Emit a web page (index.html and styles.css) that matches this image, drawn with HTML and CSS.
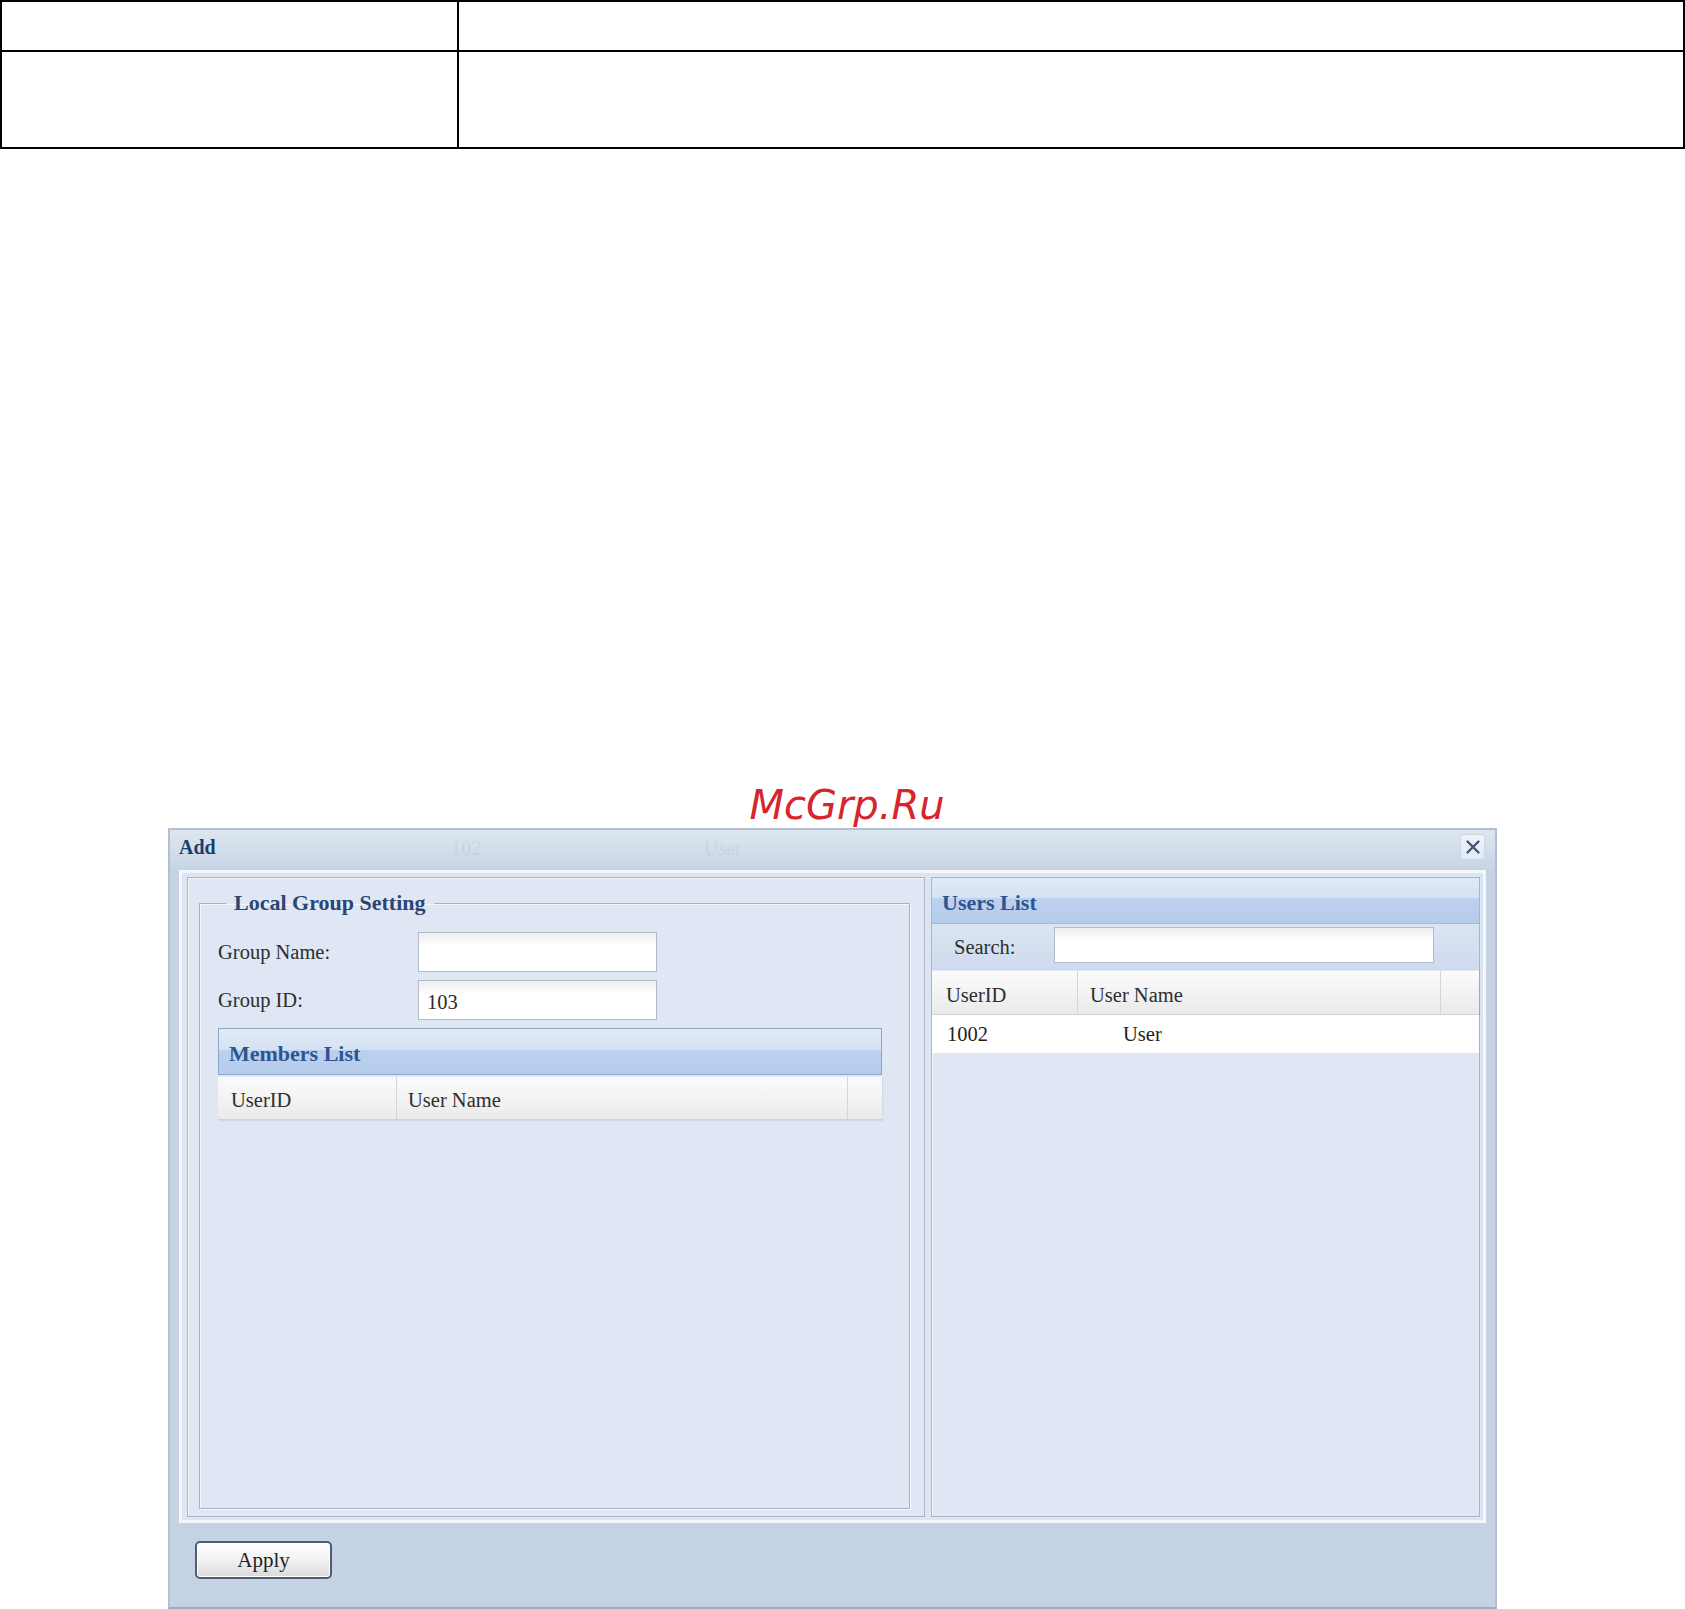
FILE: index.html
```html
<!DOCTYPE html>
<html lang="en">
<head>
<meta charset="utf-8">
<title>Add Local Group</title>
<link rel="stylesheet" href="styles.css">
</head>
<body>
<div class="doc-table">
  <div class="cell c1 r1"></div><div class="cell c2 r1"></div>
  <div class="cell c1 r2"></div><div class="cell c2 r2"></div>
</div>

<div class="watermark">McGrp.Ru</div>

<div class="dialog">
  <div class="titlebar">
    <span class="title">Add</span>
    <span class="ghost g1">102</span>
    <span class="ghost g2">User</span>
    <button class="close" type="button" aria-label="Close">
      <svg width="16" height="16" viewBox="0 0 16 16"><path d="M2.5 2.5L13.5 13.5M13.5 2.5L2.5 13.5" stroke="#405578" stroke-width="2.4" stroke-linecap="round" fill="none"/></svg>
    </button>
  </div>
  <div class="dialog-body">
    <div class="frame">
      <div class="panel left-panel">
        <fieldset class="group">
          <legend>Local Group Setting</legend>
          <div class="form-row"><span class="label">Group Name:</span><div class="input"></div></div>
          <div class="form-row"><span class="label">Group ID:</span><div class="input">103</div></div>
          <div class="members">
            <div class="grid-header members-head">Members List</div>
            <div class="col-head">
              <div class="col m1">UserID</div>
              <div class="col m2">User Name</div>
              <div class="col m3"></div>
            </div>
          </div>
        </fieldset>
      </div>
      <div class="panel right-panel">
        <div class="grid-header users-head">Users List</div>
        <div class="search-row">
          <span class="search-label">Search:</span>
          <div class="input search"></div>
        </div>
        <div class="col-head users-cols">
          <div class="col u1">UserID</div>
          <div class="col u2">User Name</div>
          <div class="col u3"></div>
        </div>
        <div class="data-row">
          <div class="col d1">1002</div>
          <div class="col d2">User</div>
        </div>
      </div>
    </div>
    <div class="footer">
      <button class="apply" type="button">Apply</button>
    </div>
  </div>
</div>
</body>
</html>
```

FILE: styles.css
```css
html, body {
  margin: 0;
  padding: 0;
  background: #ffffff;
}

body {
  font-family: "Liberation Serif", "Times New Roman", serif;
  color: #2a2a2a;
}

/* top document table */
.doc-table {
  display: grid;
  grid-template-columns: 457px 1226px;
  width: 1685px;
  box-sizing: border-box;
  border-top: 2px solid #000;
  border-left: 2px solid #000;
}

.cell {
  box-sizing: border-box;
  border-right: 2px solid #000;
  border-bottom: 2px solid #000;
}

.r1 { height: 50px; }
.r2 { height: 97px; }

/* watermark */
.watermark {
  margin-top: 633px;
  height: 46px;
  line-height: 46px;
  padding-left: 9px;
  text-align: center;
  font-family: "DejaVu Sans", sans-serif;
  font-style: italic;
  font-size: 40px;
  color: #d6252b;
}

/* dialog */
.dialog {
  margin: 0 0 0 168px;
  width: 1329px;
  height: 781px;
  box-sizing: border-box;
  border: 2px solid #b4c0cf;
  border-bottom-color: #9eabbc;
  background: #c4d2e4;
  display: flex;
  flex-direction: column;
}

.titlebar {
  position: relative;
  height: 40px;
  flex: none;
  display: flex;
  align-items: flex-start;
  padding: 5px 10px 0 9px;
  box-sizing: border-box;
  background: linear-gradient(to bottom, #dde6f0 0%, #d3deea 50%, #c6d4e5 100%);
}

.title {
  font-weight: bold;
  font-size: 20px;
  line-height: 24px;
  color: #1e3c6c;
}

.ghost {
  position: absolute;
  top: 6px;
  font-size: 20px;
  line-height: 24px;
  color: rgba(175, 190, 210, 0.35);
}

.g1 { left: 281px; }
.g2 { left: 534px; }

.close {
  margin-left: auto;
  margin-top: -1px;
  width: 25px;
  height: 26px;
  padding: 0;
  box-sizing: border-box;
  border: 1px solid #cdd8e5;
  border-radius: 3px;
  background: linear-gradient(to bottom, #f0f4f9, #e3eaf4);
  display: flex;
  align-items: center;
  justify-content: center;
}

.close svg { display: block; }

.dialog-body {
  flex: 1;
  display: flex;
  flex-direction: column;
  padding: 0 9px;
}

.frame {
  height: 653px;
  flex: none;
  box-sizing: border-box;
  border: 3px solid #f3f7fc;
  padding: 4px 3px 3px 5px;
  background: #dde5f2;
  display: flex;
  gap: 6px;
}

.panel {
  box-sizing: border-box;
  height: 640px;
  border: 1px solid #a9b5c6;
  background: #dfe7f4;
  box-shadow: inset 1px 1px 0 #f2f6fb;
}

.left-panel {
  width: 738px;
  padding: 12px 14px 7px 11px;
  display: flex;
  flex-direction: column;
}

.group {
  flex: 1;
  margin: 0;
  min-width: 0;
  padding: 16px 26px 0 18px;
  border: 1px solid #a8b2c0;
  box-shadow: 1px 1px 0 #f4f7fb, inset 1px 1px 0 #f4f7fb;
}

.group legend {
  margin-left: 8px;
  padding: 0 8px;
  font-weight: bold;
  font-size: 22px;
  line-height: 26px;
  color: #2b4673;
}

.form-row {
  display: flex;
  align-items: center;
  height: 40px;
  margin-bottom: 8px;
}

.label {
  width: 200px;
  font-size: 20.5px;
  color: #2e2e2e;
}

.input {
  box-sizing: border-box;
  width: 239px;
  height: 40px;
  border: 1px solid #b3bbc6;
  background: linear-gradient(to bottom, #eeeeee 0%, #ffffff 35%, #ffffff 100%);
  padding: 6px 0 0 8px;
  font-size: 20.5px;
  line-height: 30px;
  color: #2a2a2a;
}

.members {
  width: 664px;
  margin-top: 1px;
}

.grid-header {
  box-sizing: border-box;
  display: flex;
  align-items: center;
  padding-left: 10px;
  padding-top: 4px;
  font-weight: bold;
  font-size: 22px;
  color: #2d5592;
}

.members-head {
  height: 47px;
  border: 1px solid #8ea6c8;
  background: linear-gradient(to bottom, #e1eaf6 0%, #d5e2f3 46%, #bcd1ef 47%, #b5cbeb 100%);
}

.col-head {
  display: flex;
  box-sizing: border-box;
  height: 43px;
  margin-top: 2px;
  background: linear-gradient(to bottom, #fbfbfb 0%, #f3f3f3 50%, #eaeaea 100%);
  border-bottom: 1px solid #d2d2d2;
  box-shadow: 1px 1px 1px rgba(0, 0, 0, 0.06);
}

.col {
  box-sizing: border-box;
  display: flex;
  align-items: center;
  font-size: 20.5px;
  color: #2e2e2e;
}

.col-head .col {
  border-right: 1px solid #d5d5d5;
  padding-top: 5px;
}
.col-head .col:last-child { border-right: none; }

.m1 { width: 179px; padding-left: 13px; }
.m2 { width: 451px; padding-left: 11px; }
.m3 { flex: 1; }

/* right panel */
.right-panel {
  width: 549px;
  display: flex;
  flex-direction: column;
}

.users-head {
  height: 46px;
  flex: none;
  border-bottom: 1px solid #a6b9d5;
  background: linear-gradient(to bottom, #e0e9f6 0%, #d6e2f2 44%, #bdd2ef 45%, #b5cbeb 100%);
}

.search-row {
  height: 46px;
  flex: none;
  box-sizing: border-box;
  display: flex;
  align-items: flex-start;
  padding-top: 3px;
  background: linear-gradient(to bottom, #dbe5f2, #cedbee);
}

.search-label {
  box-sizing: border-box;
  width: 122px;
  padding-left: 22px;
  padding-top: 2px;
  font-size: 20.5px;
  line-height: 36px;
  color: #2e2e2e;
}

.input.search {
  width: 380px;
  height: 36px;
}

.users-cols {
  margin-top: 1px;
  height: 44px;
  flex: none;
}

.u1 { width: 146px; padding-left: 14px; }
.u2 { width: 363px; padding-left: 12px; }
.u3 { flex: 1; }

.data-row {
  display: flex;
  height: 38px;
  flex: none;
  background: #ffffff;
}

.d1 { width: 146px; padding-left: 15px; color: #222; }
.d2 { padding-left: 45px; color: #222; }

/* footer */
.footer {
  flex: 1;
  padding: 18px 0 0 16px;
}

.apply {
  width: 137px;
  height: 38px;
  box-sizing: border-box;
  border: 2px solid #4f5d72;
  border-radius: 5px;
  background: linear-gradient(to bottom, #ffffff 0%, #f1f1f1 50%, #dadada 100%);
  box-shadow: inset 0 0 0 1px #ffffff;
  font-family: "Liberation Serif", "Times New Roman", serif;
  font-size: 21px;
  color: #222;
  padding: 0;
}
```
